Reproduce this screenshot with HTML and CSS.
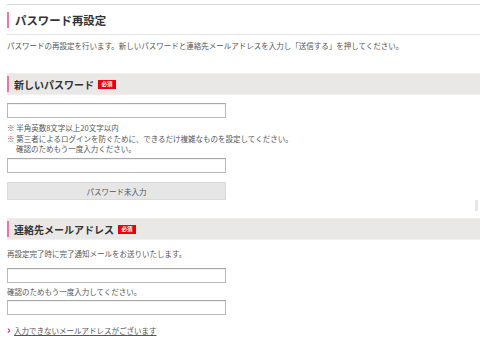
FILE: index.html
```html
<!DOCTYPE html>
<html lang="ja">
<head>
  <meta charset="UTF-8">
  <meta name="viewport" content="width=device-width, initial-scale=1.0">
  <title>パスワード再設定</title>
  <link rel="stylesheet" href="styles.css">
</head>
<body>
  <div class="page">
    <div class="title">
      <h1>パスワード再設定</h1>
    </div>
    <p class="lead">パスワードの再設定を行います。新しいパスワードと連絡先メールアドレスを入力し「送信する」を押してください。</p>

    <div class="band">
      <h2>新しいパスワード<span class="req">必須</span></h2>
    </div>
    <input type="password" class="field first">
    <ul class="notes">
      <li>※ 半角英数8文字以上20文字以内</li>
      <li>※ 第三者によるログインを防ぐために、できるだけ複雑なものを設定してください。</li>
      <li class="sub">確認のためもう一度入力ください。</li>
    </ul>
    <input type="password" class="field again">
    <button class="state">パスワード未入力</button>

    <div class="band second">
      <h2>連絡先メールアドレス<span class="req">必須</span></h2>
    </div>
    <p class="text">再設定完了時に完了通知メールをお送りいたします。</p>
    <input type="text" class="field mail">
    <p class="text confirm">確認のためもう一度入力してください。</p>
    <input type="text" class="field mail2">
    <a class="more" href="#">入力できないメールアドレスがございます</a>
  </div>
  <div class="thumb"></div>
</body>
</html>
```

FILE: styles.css
```css
* {
  padding: 0;
  margin: 0;
  box-sizing: border-box;
}
body {
  font-family: "Noto Sans CJK JP", "Liberation Sans", sans-serif;
  color: #555;
  background: #fff;
}
.page {
  padding: 4px 0 0 7px;
}
.title {
  border-top: 1px solid #dcdcdc;
  border-bottom: 1px solid #e2e2e2;
  padding: 7px 0 6px;
}
h1 {
  border-left: 2px solid #e67aa2;
  padding-left: 6px;
  font-size: 11.4px;
  line-height: 16px;
  color: #333;
  font-weight: bold;
}
.lead {
  margin-top: 5px;
  font-size: 7.5px;
  line-height: 12px;
}
.band {
  margin-top: 21px;
  height: 22px;
  padding: 3px 0;
  background: #e9e8e6;
  border-top: 1px solid #efeeec;
  border-bottom: 1px solid #f1f0ee;
}
.band h2 {
  display: flex;
  align-items: center;
  border-left: 2px solid #e67aa2;
  padding-left: 5px;
  height: 16px;
  margin-top: -1px;
  font-size: 10px;
  color: #333;
  font-weight: bold;
}
.req {
  display: inline-block;
  margin-left: 4px;
  width: 18px;
  height: 9px;
  line-height: 9px;
  background: #e60012;
  color: #fff;
  font-size: 5.5px;
  text-align: center;
}
.field {
  display: block;
  width: 219px;
  height: 15px;
  border: 1px solid #b9b9b9;
  border-top-color: #a8a8a8;
  background: #fff;
  box-shadow: inset 0 1px 1px rgba(0, 0, 0, 0.06);
}
.first {
  margin-top: 8px;
}
.notes {
  list-style: none;
  margin-top: 5px;
  font-size: 7.5px;
  line-height: 10.5px;
}
.notes .sub {
  padding-left: 9px;
}
.again {
  margin-top: 3.5px;
}
.state {
  display: block;
  width: 219px;
  height: 18px;
  margin-top: 9px;
  background: #e6e6e6;
  border: 1px solid #dadada;
  font-family: inherit;
  font-size: 7.5px;
  color: #555;
}
.second {
  margin-top: 18px;
}
.text {
  font-size: 7.5px;
  line-height: 12px;
  margin-top: 8px;
}
.mail {
  margin-top: 8px;
}
.confirm {
  margin-top: 3px;
}
.mail2 {
  margin-top: 2px;
}
.more {
  display: inline-block;
  margin-top: 5px;
  font-size: 7.5px;
  line-height: 12px;
  color: #555;
  text-decoration: underline;
}
.more::before {
  content: "›";
  display: inline-block;
  width: 7px;
  color: #e4007f;
  font-size: 11px;
  font-weight: bold;
  text-decoration: none;
}
.thumb {
  position: absolute;
  right: 2px;
  top: 200px;
  width: 3px;
  height: 11px;
  background: #e6e6e6;
}
```
